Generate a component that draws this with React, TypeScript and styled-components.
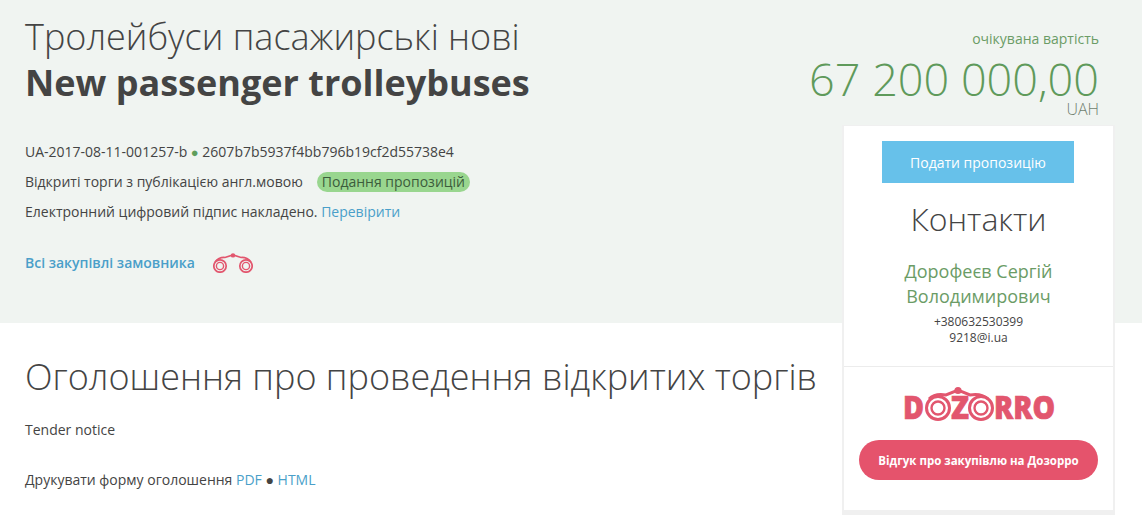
import styled, { createGlobalStyle } from "styled-components";

const GlobalStyle = createGlobalStyle`
  html, body {
    margin: 0;
    padding: 0;
    background: #fff;
    overflow: hidden;
  }
  body {
    font-family: "Open Sans", "Liberation Sans", sans-serif;
    color: #444;
  }
`;

const Binoculars = ({ className }: { className?: string }) => (
  <svg className={className} viewBox="0 0 40 20" fill="none" stroke="#e2566e">
    <circle cx="7" cy="13" r="6.2" strokeWidth="1.7" />
    <circle cx="7" cy="13" r="3.6" strokeWidth="1.4" />
    <circle cx="33" cy="13" r="6.2" strokeWidth="1.7" />
    <circle cx="33" cy="13" r="3.6" strokeWidth="1.4" />
    <path d="M2 9 Q6 4 12 4.5 L20 2 L28 4.5 Q34 4 38 9" strokeWidth="1.7" />
    <circle cx="20" cy="2.4" r="2.2" fill="#e2566e" stroke="none" />
  </svg>
);

const DozorroLogo = () => (
  <LogoSvg viewBox="0 0 154 38">
    <path
      d="M27 13 Q33 7 44 9 L56 4 L68 9 Q79 7 86 13"
      fill="none"
      stroke="#e2566e"
      strokeWidth="3"
    />
    <circle cx="56" cy="4.5" r="3.6" fill="#e2566e" />
    <LogoLetters x="1" y="33" textLength="21" lengthAdjust="spacingAndGlyphs">
      D
    </LogoLetters>
    <circle cx="36" cy="22" r="11.5" fill="#fff" stroke="#e2566e" strokeWidth="3" />
    <circle cx="36" cy="22" r="6.5" fill="#fff" stroke="#e2566e" strokeWidth="2.4" />
    <LogoLetters x="49" y="33" textLength="18" lengthAdjust="spacingAndGlyphs">
      Z
    </LogoLetters>
    <circle cx="79" cy="22" r="11.5" fill="#fff" stroke="#e2566e" strokeWidth="3" />
    <circle cx="79" cy="22" r="6.5" fill="#fff" stroke="#e2566e" strokeWidth="2.4" />
    <LogoLetters x="92" y="33" textLength="61" lengthAdjust="spacingAndGlyphs">
      RRO
    </LogoLetters>
  </LogoSvg>
);

export default function App() {
  return (
    <Page>
      <GlobalStyle />
      <Hero>
        <HeroMain>
          <Title>Тролейбуси пасажирські нові</Title>
          <TitleEn>New passenger trolleybuses</TitleEn>
          <MetaList>
            <MetaRow>
              UA-2017-08-11-001257-b <Dot>●</Dot> 2607b7b5937f4bb796b19cf2d55738e4
            </MetaRow>
            <MetaRow>
              Відкриті торги з публікацією англ.мовою
              <Status>Подання пропозицій</Status>
            </MetaRow>
            <MetaRow>
              Електронний цифровий підпис накладено. <TextLink>Перевірити</TextLink>
            </MetaRow>
          </MetaList>
          <BuyerRow>
            <BuyerLink>Всі закупівлі замовника</BuyerLink>
            <BuyerIcon />
          </BuyerRow>
        </HeroMain>
        <Price>
          <PriceLabel>очікувана вартість</PriceLabel>
          <PriceValue>67 200 000,00</PriceValue>
          <Currency>UAH</Currency>
        </Price>
      </Hero>

      <Notice>
        <NoticeTitle>Оголошення про проведення відкритих торгів</NoticeTitle>
        <NoticeText>Tender notice</NoticeText>
        <PrintRow>
          Друкувати форму оголошення <TextLink>PDF</TextLink> ● <TextLink>HTML</TextLink>
        </PrintRow>
      </Notice>

      <Sidebar>
        <ContactBlock>
          <SubmitButton>Подати пропозицію</SubmitButton>
          <ContactsTitle>Контакти</ContactsTitle>
          <ContactName>Дорофеєв Сергій Володимирович</ContactName>
          <ContactLine>+380632530399</ContactLine>
          <ContactLine>9218@i.ua</ContactLine>
        </ContactBlock>
        <DozorroBlock>
          <DozorroLogo />
          <ReviewButton>Відгук про закупівлю на Дозорро</ReviewButton>
        </DozorroBlock>
      </Sidebar>
    </Page>
  );
}

const Page = styled.div`
  position: relative;
  width: 1142px;
  height: 528px;
  overflow: hidden;
`;

const Hero = styled.header`
  height: 323px;
  box-sizing: border-box;
  background: #f0f4f1;
  padding: 14px 43px 0 25px;
  display: flex;
  justify-content: space-between;
`;

const HeroMain = styled.div`
  display: flex;
  flex-direction: column;
`;

const Title = styled.h1`
  margin: 0;
  font-size: 36px;
  line-height: 46px;
  font-weight: 300;
  color: #444;
`;

const TitleEn = styled.h2`
  margin: 0;
  font-size: 36px;
  line-height: 46px;
  font-weight: 700;
  color: #444;
`;

const MetaList = styled.div`
  margin-top: 36px;
  display: flex;
  flex-direction: column;
  gap: 10px;
`;

const MetaRow = styled.div`
  height: 20px;
  font-size: 14px;
  line-height: 20px;
  color: #444;
`;

const Dot = styled.span`
  color: #5f9e5c;
  font-size: 13px;
  line-height: 0;
`;

const Status = styled.span`
  margin-left: 14px;
  padding: 0 5px;
  display: inline-block;
  border-radius: 10px;
  background: #99d68f;
  line-height: 20px;
  color: #3c5c3c;
`;

const TextLink = styled.a`
  color: #4a9fc9;
`;

const BuyerRow = styled.div`
  margin-top: 29px;
  display: flex;
  align-items: center;
  gap: 18px;
`;

const BuyerLink = styled.a`
  font-size: 14px;
  font-weight: 600;
  color: #4a9fc9;
`;

const BuyerIcon = styled(Binoculars)`
  width: 40px;
  height: 20px;
  margin-top: 2px;
`;

const Price = styled.div`
  margin-top: 14px;
  display: flex;
  flex-direction: column;
  align-items: flex-end;
`;

const PriceLabel = styled.div`
  font-size: 14px;
  line-height: 22px;
  color: #6b9c66;
`;

const PriceValue = styled.div`
  margin-top: 2px;
  font-size: 45px;
  line-height: 54px;
  font-weight: 300;
  color: #5f9a5b;
`;

const Currency = styled.div`
  margin-top: -6px;
  font-size: 16px;
  line-height: 18px;
  font-weight: 300;
  color: #6f7f6f;
`;

const Notice = styled.section`
  padding: 29px 0 0 25px;
`;

const NoticeTitle = styled.h2`
  margin: 0;
  font-size: 36px;
  line-height: 50px;
  font-weight: 300;
  color: #444;
`;

const NoticeText = styled.p`
  margin: 18px 0 0;
  font-size: 14px;
  line-height: 20px;
  color: #444;
`;

const PrintRow = styled(NoticeText)`
  margin-top: 30px;
`;

/* overlaps the green band and the white section */
const Sidebar = styled.aside`
  position: absolute;
  left: 842px;
  top: 125px;
  width: 273px;
  box-sizing: border-box;
  background: #fff;
  border: 2px solid #f0f0f0;
  border-top-width: 1px;
  border-bottom-width: 5px;
`;

const ContactBlock = styled.div`
  height: 241px;
  box-sizing: border-box;
  padding-top: 15px;
  display: flex;
  flex-direction: column;
  align-items: center;
  border-bottom: 1px solid #ececec;
`;

const SubmitButton = styled.div`
  width: 192px;
  height: 42px;
  margin-right: 1px;
  display: flex;
  align-items: center;
  justify-content: center;
  background: #67c1ea;
  color: #fff;
  font-size: 14px;
`;

const ContactsTitle = styled.div`
  margin-top: 15px;
  font-size: 32px;
  line-height: 42px;
  font-weight: 300;
  color: #444;
`;

const ContactName = styled.div`
  margin-top: 19px;
  margin-bottom: 5px;
  width: 190px;
  text-align: center;
  font-size: 18px;
  line-height: 25px;
  color: #6b9c66;
`;

const ContactLine = styled.div`
  font-size: 12px;
  line-height: 16px;
  color: #444;
`;

const DozorroBlock = styled.div`
  height: 143px;
  box-sizing: border-box;
  padding-top: 19px;
  display: flex;
  flex-direction: column;
  align-items: center;
`;

const LogoSvg = styled.svg`
  width: 154px;
  height: 38px;
  overflow: visible;
`;

const LogoLetters = styled.text`
  font-family: "Open Sans", sans-serif;
  font-weight: 800;
  font-size: 32px;
  fill: #e2566e;
  stroke: #e2566e;
  stroke-width: 0.7px;
`;

const ReviewButton = styled.div`
  margin-top: 16px;
  width: 239px;
  height: 40px;
  display: flex;
  align-items: center;
  justify-content: center;
  border-radius: 20px;
  background: #e5536c;
  color: #fff;
  font-size: 11.5px;
  font-weight: 700;
`;
